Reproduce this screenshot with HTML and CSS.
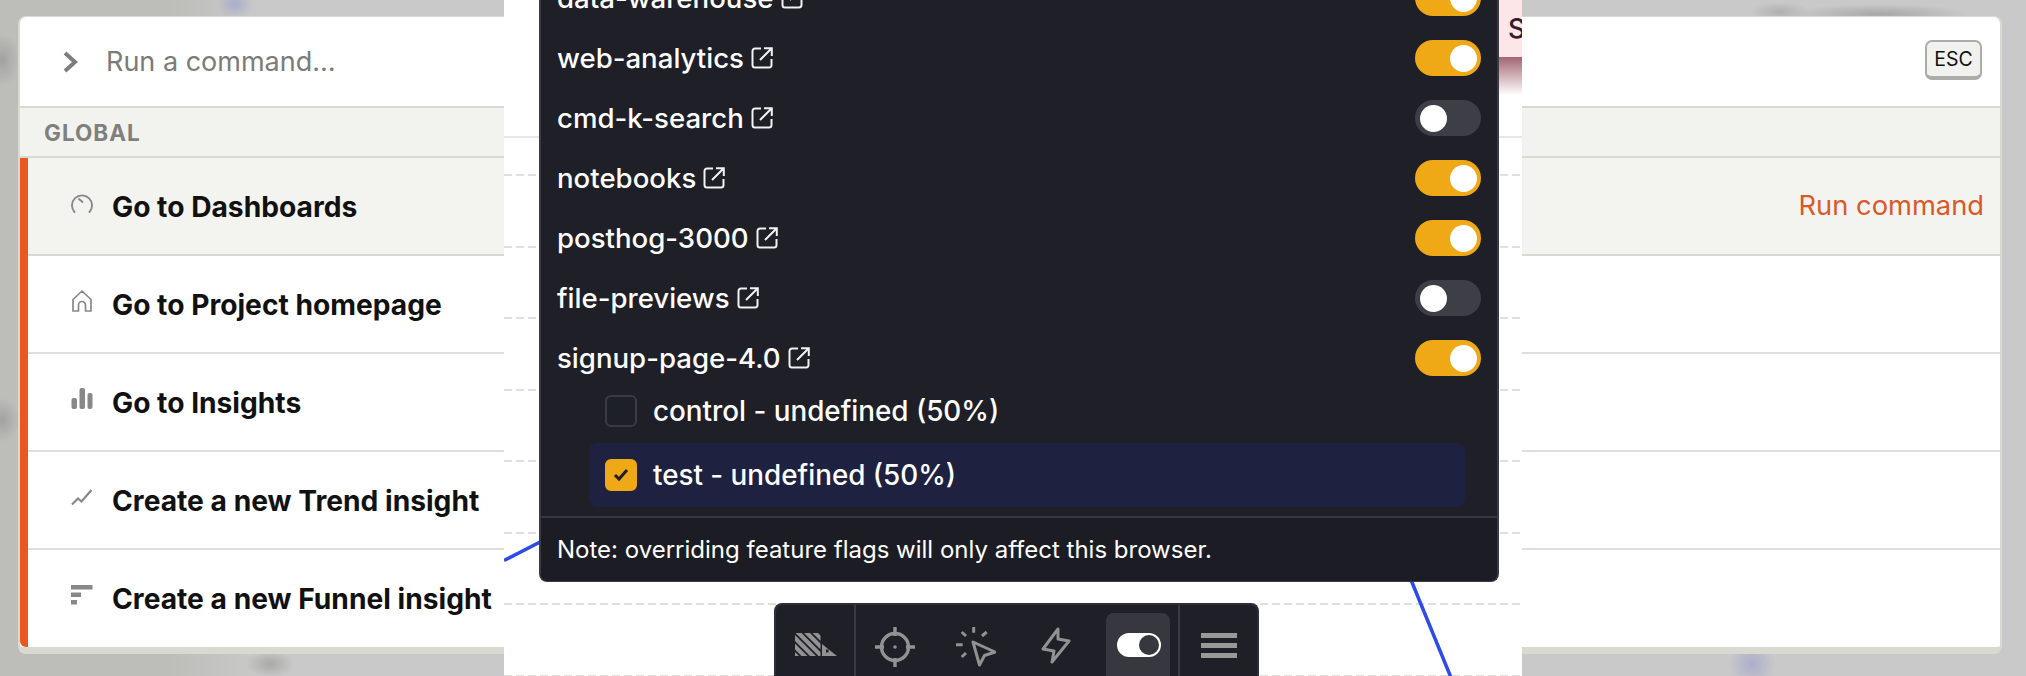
FILE: index.html
```html
<!DOCTYPE html>
<html lang="en">
<head>
    <meta charset="UTF-8">
    <meta name="viewport" content="width=device-width, initial-scale=1.0">
    <title>Command palette</title>
    <link rel="stylesheet" href="styles.css">
</head>
<body>
    <!-- Command palette, behind the page column -->
    <div class="palette">
        <div class="palette-input">
            <svg class="chevron" viewBox="0 0 15 22"><path d="M2 2l10 9-10 9" fill="none" stroke="#7d7d7b" stroke-width="4"/></svg>
            <span class="placeholder">Run a command…</span>
            <kbd class="esc">ESC</kbd>
        </div>
        <div class="scope">GLOBAL</div>
        <div class="results">
            <div class="result active">
                <svg class="result-icon" viewBox="0 0 22 24"><path d="M3.500 21A10 10 0 1 1 18.500 21" fill="none" stroke="#888" stroke-width="1.900" stroke-linecap="round"/><path d="M8 8l3.500 3" fill="none" stroke="#888" stroke-width="1.900" stroke-linecap="round"/></svg>
                <span class="result-label">Go to Dashboards</span>
                <span class="result-action">Run command</span>
            </div>
            <div class="result">
                <svg class="result-icon" viewBox="0 0 22 24"><path d="M2 22V10.500L11 2l9 8.500V22h-5.500v-6a3.500 3.500 0 0 0-7 0v6z" fill="none" stroke="#888" stroke-width="1.700" stroke-linejoin="round"/></svg>
                <span class="result-label">Go to Project homepage</span>
            </div>
            <div class="result">
                <svg class="result-icon" viewBox="0 0 22 24"><g fill="#888"><rect x="0.500" y="11" width="5.500" height="11" rx="2"/><rect x="8.500" y="1" width="5.500" height="21" rx="2"/><rect x="16.500" y="6" width="5" height="16" rx="2"/></g></svg>
                <span class="result-label">Go to Insights</span>
            </div>
            <div class="result">
                <svg class="result-icon" viewBox="0 0 22 24"><path d="M1 19.500l6-6 3.500 3L20.500 5" fill="none" stroke="#888" stroke-width="2.200"/></svg>
                <span class="result-label">Create a new Trend insight</span>
            </div>
            <div class="result">
                <svg class="result-icon" viewBox="0 0 22 24"><g fill="#888"><rect x="0" y="2" width="21.500" height="4.500"/><rect x="0" y="9.500" width="10" height="4.500"/><rect x="0" y="17" width="6" height="4.500"/></g></svg>
                <span class="result-label">Create a new Funnel insight</span>
            </div>
        </div>
    </div>

    <!-- Page column with the chart grid -->
    <div class="page-column">
        <div class="chart-top"></div>
        <div class="grid-line"></div>
        <div class="grid-line"></div>
        <div class="grid-line"></div>
        <div class="grid-line"></div>
        <div class="grid-line"></div>
        <div class="grid-line"></div>
        <div class="grid-line"></div>
        <div class="grid-line"></div>
        <svg class="chart-lines" viewBox="0 0 1018 676"><path d="M0 560.500L40 540M905 575L948 680" fill="none" stroke="#2f4be6" stroke-width="3.500"/></svg>
        <div class="alert"><span class="alert-text">S</span></div>
        <div class="alert-shade"></div>
    </div>

    <!-- Feature flags popover -->
    <div class="flags">
        <div class="flag-list">
            <div class="flag"><span class="flag-name">data-warehouse</span><svg class="ext" viewBox="0 0 22 22"><path d="M10 1.500H4A2.500 2.500 0 0 0 1.500 4v14A2.500 2.500 0 0 0 4 20.500h14a2.500 2.500 0 0 0 2.500-2.500v-6M9 13L20 2M13 1.200h7.800V9" fill="none" stroke="#f2f2f2" stroke-width="2"/></svg><span class="toggle on"></span></div>
            <div class="flag"><span class="flag-name">web-analytics</span><svg class="ext" viewBox="0 0 22 22"><path d="M10 1.500H4A2.500 2.500 0 0 0 1.500 4v14A2.500 2.500 0 0 0 4 20.500h14a2.500 2.500 0 0 0 2.500-2.500v-6M9 13L20 2M13 1.200h7.800V9" fill="none" stroke="#f2f2f2" stroke-width="2"/></svg><span class="toggle on"></span></div>
            <div class="flag"><span class="flag-name">cmd-k-search</span><svg class="ext" viewBox="0 0 22 22"><path d="M10 1.500H4A2.500 2.500 0 0 0 1.500 4v14A2.500 2.500 0 0 0 4 20.500h14a2.500 2.500 0 0 0 2.500-2.500v-6M9 13L20 2M13 1.200h7.800V9" fill="none" stroke="#f2f2f2" stroke-width="2"/></svg><span class="toggle"></span></div>
            <div class="flag"><span class="flag-name">notebooks</span><svg class="ext" viewBox="0 0 22 22"><path d="M10 1.500H4A2.500 2.500 0 0 0 1.500 4v14A2.500 2.500 0 0 0 4 20.500h14a2.500 2.500 0 0 0 2.500-2.500v-6M9 13L20 2M13 1.200h7.800V9" fill="none" stroke="#f2f2f2" stroke-width="2"/></svg><span class="toggle on"></span></div>
            <div class="flag"><span class="flag-name">posthog-3000</span><svg class="ext" viewBox="0 0 22 22"><path d="M10 1.500H4A2.500 2.500 0 0 0 1.500 4v14A2.500 2.500 0 0 0 4 20.500h14a2.500 2.500 0 0 0 2.500-2.500v-6M9 13L20 2M13 1.200h7.800V9" fill="none" stroke="#f2f2f2" stroke-width="2"/></svg><span class="toggle on"></span></div>
            <div class="flag"><span class="flag-name">file-previews</span><svg class="ext" viewBox="0 0 22 22"><path d="M10 1.500H4A2.500 2.500 0 0 0 1.500 4v14A2.500 2.500 0 0 0 4 20.500h14a2.500 2.500 0 0 0 2.500-2.500v-6M9 13L20 2M13 1.200h7.800V9" fill="none" stroke="#f2f2f2" stroke-width="2"/></svg><span class="toggle"></span></div>
            <div class="flag"><span class="flag-name">signup-page-4.0</span><svg class="ext" viewBox="0 0 22 22"><path d="M10 1.500H4A2.500 2.500 0 0 0 1.500 4v14A2.500 2.500 0 0 0 4 20.500h14a2.500 2.500 0 0 0 2.500-2.500v-6M9 13L20 2M13 1.200h7.800V9" fill="none" stroke="#f2f2f2" stroke-width="2"/></svg><span class="toggle on"></span></div>
        </div>
        <div class="variants">
            <div class="variant"><span class="check"></span>control - undefined (50%)</div>
            <div class="variant selected"><span class="check checked"><svg viewBox="0 0 16 14"><path d="M2 7l4 4 8-9" fill="none" stroke="#1e1f27" stroke-width="3"/></svg></span>test - undefined (50%)</div>
        </div>
        <div class="note">Note: overriding feature flags will only affect this browser.</div>
    </div>

    <!-- Toolbar -->
    <div class="toolbar">
        <div class="tool-logo">
            <svg class="logo" viewBox="0 0 42 23"><path fill="#929292" fill-rule="evenodd" d="M0 19l4 4H0zM0 10.500l12.500 12.500H6.500L0 16.500zM0 2l21 21h-6L0 8zM.500 0h6l19 19v4h-2zM9 0h6l10.500 10.500v6zM17.500 0H23l2.500 2.500V8zM27 11l15 12H27zM31 16.500v3h2.500v-3z"/></svg>
        </div>
        <div class="tool-buttons">
            <div class="tool-button">
                <svg viewBox="0 0 40 40"><g fill="none" stroke="#929292" stroke-width="3.400"><circle cx="20" cy="20" r="13.500"/><path d="M20 0v9M20 31v9M0 20h9M31 20h9"/></g><circle cx="20" cy="20" r="1.800" fill="#929292"/></svg>
            </div>
            <div class="tool-button">
                <svg viewBox="0 0 40 40"><g fill="none" stroke="#929292" stroke-width="3"><path d="M17 15l22 10-10.500 3.500-5 9.500z" stroke-linejoin="round"/><path d="M17.700 0v5.700M5.700 5l4.300 4M30.700 5l-4.700 4M0 17.700h6.700M10 26l-4.300 4"/></g></svg>
            </div>
            <div class="tool-button">
                <svg class="bolt" viewBox="0 0 32 38"><path d="M17 2L2 22l11 2-2 11 17-21-11-2z" fill="none" stroke="#929292" stroke-width="3" stroke-linejoin="round"/></svg>
            </div>
            <div class="tool-button current"><span class="mini-toggle"></span></div>
        </div>
        <div class="tool-menu">
            <span class="menu-bar"></span>
            <span class="menu-bar"></span>
            <span class="menu-bar"></span>
        </div>
    </div>
</body>
</html>
```

FILE: styles.css
```css
* {
    box-sizing: border-box;
}

html,
body {
    height: 676px;
}

body {
    margin: 0;
    padding: 16px 24px 0 18px;
    overflow: hidden;
    font-family: Inter, "Noto Sans", sans-serif;
    background-color: #c9c9c9;
    background-image:
        radial-gradient(ellipse 18px 14px at 235px 4px, #a9aecb, transparent),
        radial-gradient(ellipse 24px 14px at 270px 664px, #a9a9a7, transparent),
        radial-gradient(ellipse 24px 24px at 1752px 664px, #adadcb, transparent),
        radial-gradient(ellipse 30px 10px at 1780px 12px, #b0b0b0, transparent),
        radial-gradient(ellipse 90px 10px at 1880px 14px, #a8a8a8, transparent),
        radial-gradient(ellipse 18px 26px at 2px 60px, #a2a2a0, transparent),
        radial-gradient(ellipse 18px 22px at 2px 420px, #a2a2a0, transparent),
        linear-gradient(90deg, #bdbdb9 0, #bdbdb9 170px, #c9c9c9 260px);
}

/* Command palette */
.palette {
    width: 1984px;
    height: 638px;
    display: flex;
    flex-direction: column;
    background: #fff;
    border: 2px solid #d9d9d2;
    border-top-width: 1px;
    border-bottom-width: 7px;
    border-radius: 8px;
}

.palette-input {
    height: 91px;
    flex-shrink: 0;
    display: flex;
    align-items: center;
    padding: 0 18px 0 43px;
    border-bottom: 2px solid #d9d9d2;
}

.chevron {
    width: 15px;
    height: 22px;
    margin-right: 28px;
}

.placeholder {
    flex: 1;
    font-size: 27px;
    color: #7b7b79;
}

.esc {
    width: 57px;
    height: 40px;
    display: flex;
    align-items: center;
    justify-content: center;
    margin-top: -4px;
    font-family: Inter, sans-serif;
    font-size: 19.5px;
    color: #111;
    background: #f1f1ed;
    border: 2px solid #acacaa;
    border-bottom-width: 4px;
    border-radius: 7px;
}

.scope {
    height: 50px;
    flex-shrink: 0;
    display: flex;
    align-items: center;
    padding-left: 24px;
    font-size: 22.5px;
    font-weight: 700;
    letter-spacing: 1px;
    color: #7f7f7c;
    background: #f2f2ee;
    border-bottom: 2px solid #d9d9d2;
}

.results {
    flex: 1;
    border-left: 8px solid #e9581e;
    border-bottom-left-radius: 6px;
}

.result {
    height: 98px;
    display: flex;
    align-items: center;
    padding: 0 16px 0 43px;
    border-bottom: 2px solid #dfdfda;
}

.result:last-child {
    height: 96px;
    border-bottom: 0;
}

.result.active {
    background: #f3f3ef;
    border-bottom-color: #d9d9d2;
}

.result-icon {
    width: 22px;
    height: 24px;
    margin-right: 19px;
    margin-top: -6px;
}

.result-label {
    flex: 1;
    margin-top: 2px;
    font-size: 28.2px;
    font-weight: 700;
    color: #111;
}

.result-action {
    font-size: 27.3px;
    color: #d9592a;
    margin-top: -1px;
}

/* Page column */
.page-column {
    position: absolute;
    left: 504px;
    top: 0;
    width: 1018px;
    height: 676px;
    display: flex;
    flex-direction: column;
    background: #fff;
}

.chart-top {
    height: 138px;
    flex-shrink: 0;
    margin-bottom: 36px;
    border-bottom: 2px solid #e6e6e2;
}

.grid-line {
    height: 2px;
    flex-shrink: 0;
    margin-bottom: 69.5px;
    background: repeating-linear-gradient(90deg, #dfdfdb 0 8px, transparent 8px 12px);
}

.chart-lines {
    position: absolute;
    left: 0;
    top: 0;
    width: 1018px;
    height: 676px;
}

.alert {
    position: absolute;
    top: 0;
    right: 0;
    width: 23px;
    height: 57px;
    overflow: hidden;
    padding: 13px 0 0 9px;
    background: #fde6e8;
}

.alert-text {
    font-size: 27px;
    font-weight: 500;
    line-height: 32px;
    color: #35202a;
}

.alert-shade {
    position: absolute;
    top: 57px;
    right: 0;
    width: 23px;
    height: 38px;
    background: linear-gradient(#a3656f, #fff);
}

/* Feature flags popover */
.flags {
    position: absolute;
    left: 539px;
    top: -32px;
    width: 960px;
    height: 614px;
    background: #1e1f27;
    border: 2px solid #3a3b42;
    border-top: 0;
    border-radius: 8px;
    color: #fff;
}

.flag-list {
    padding: 0 16px;
}

.flag {
    height: 60px;
    display: flex;
    align-items: center;
}

.flag-name {
    font-size: 27.6px;
    font-weight: 500;
    margin-right: 7px;
}

.ext {
    width: 22px;
    height: 22px;
    margin-right: auto;
}

.toggle {
    width: 66px;
    height: 36px;
    flex-shrink: 0;
    display: flex;
    align-items: center;
    padding: 0 5px;
    background: #3e3f46;
    border-radius: 18px;
}

.toggle::after {
    content: "";
    width: 27px;
    height: 27px;
    background: #fff;
    border-radius: 50%;
}

.toggle.on {
    justify-content: flex-end;
    padding-right: 4px;
    background: #f0a916;
}

.variants {
    margin: -1px 32px 9px 48px;
}

.variant {
    height: 48px;
    display: flex;
    align-items: center;
    gap: 16px;
    padding-left: 16px;
    font-size: 27.8px;
    font-weight: 500;
    border-radius: 8px;
}

.variant.selected {
    height: 64px;
    margin-top: 8px;
    background: #1e2240;
}

.check {
    width: 32px;
    height: 32px;
    flex-shrink: 0;
    background: #1e2028;
    border: 2px solid #3a3b42;
    border-radius: 6px;
}

.check.checked {
    display: flex;
    align-items: center;
    justify-content: center;
    background: #f0a916;
    border-color: #f0a916;
}

.check.checked svg {
    width: 16px;
    height: 14px;
}

.note {
    height: 65px;
    display: flex;
    align-items: center;
    padding: 0 16px;
    font-size: 24px;
    background: #1c1d24;
    border-top: 2px solid #36373e;
    border-radius: 0 0 6px 6px;
}

/* Toolbar */
.toolbar {
    position: absolute;
    left: 774px;
    top: 603px;
    width: 485px;
    height: 90px;
    display: flex;
    background: #1e1f27;
    border: 2px solid #2f3037;
    border-bottom: 0;
    border-radius: 8px;
}

.tool-logo {
    width: 80px;
    padding: 28px 0 0 19px;
    border-right: 2px solid #3a3b42;
}

.logo {
    display: block;
    width: 42px;
    height: 23px;
}

.tool-buttons {
    flex: 1;
    display: flex;
    gap: 17px;
    padding: 8px 0 0 7px;
}

.tool-button {
    width: 64px;
    height: 80px;
    display: flex;
    align-items: flex-start;
    justify-content: center;
    padding-top: 14px;
    border-radius: 8px;
}

.tool-button svg {
    width: 40px;
    height: 40px;
}

.tool-button .bolt {
    width: 32px;
    height: 38px;
}

.tool-button.current {
    background: #36373f;
    padding: 20px 0 0 2px;
}

.mini-toggle {
    width: 44px;
    height: 24px;
    display: flex;
    align-items: center;
    justify-content: flex-end;
    padding-right: 2px;
    background: #fff;
    border-radius: 12px;
}

.mini-toggle::after {
    content: "";
    width: 20px;
    height: 20px;
    background: #36373f;
    border-radius: 50%;
}

.tool-menu {
    width: 79px;
    display: flex;
    flex-direction: column;
    gap: 5px;
    padding: 28px 0 0 21px;
    border-left: 2px solid #3a3b42;
}

.menu-bar {
    width: 36px;
    height: 5px;
    background: #999;
}
```
